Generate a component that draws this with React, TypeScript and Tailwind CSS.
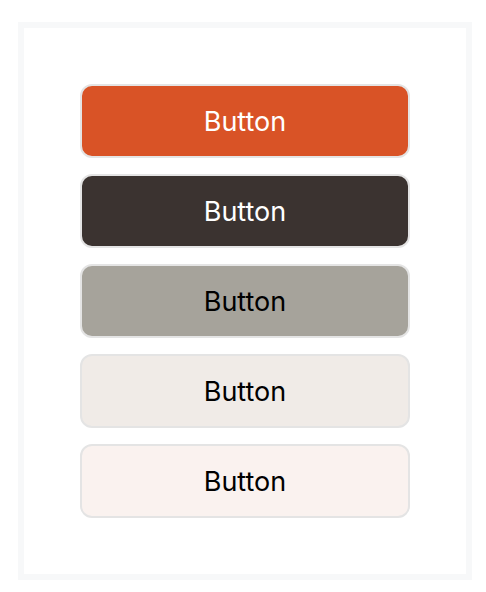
const buttons = [
  { bg: "bg-[#d95326]", text: "text-white" },
  { bg: "bg-[#3b3330]", text: "text-white" },
  { bg: "bg-[#a6a39b]", text: "text-black" },
  { bg: "bg-[#f0ebe7]", text: "text-black" },
  { bg: "bg-[#faf2ef]", text: "text-black" },
];

export default function App() {
  return (
    <div className="w-[486px] h-[592px] bg-white pt-[22px] pl-[18px]">
      <div className="w-[454px] h-[558px] border-[6px] border-[#f7f8f9] flex flex-col items-center pt-[56px] gap-4">
        {buttons.map((b, i) => (
          <button
            key={i}
            className={`w-[330px] h-[74px] pt-[3px] rounded-xl border-2 border-[#e4e4e4] ${b.bg} ${b.text} text-[27px] font-['Inter',sans-serif]`}
          >
            Button
          </button>
        ))}
      </div>
    </div>
  );
}
